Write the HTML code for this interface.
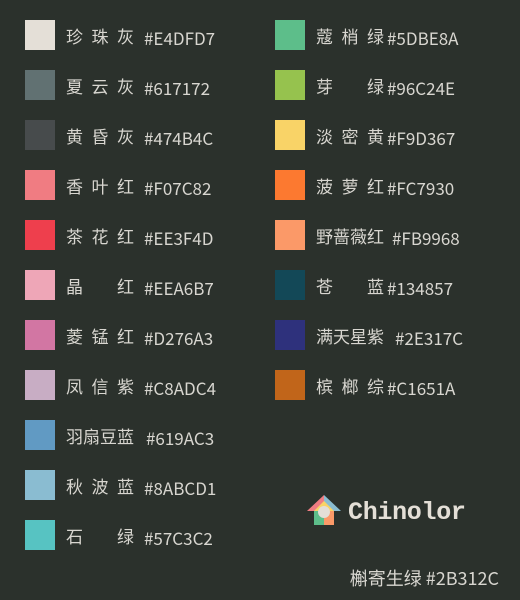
<!DOCTYPE html>
<html><head><meta charset="utf-8"><style>
html,body{margin:0;padding:0}
body{width:520px;height:600px;background:#2B312C;position:relative;overflow:hidden;font-family:"Liberation Sans","Noto Sans CJK SC",sans-serif;color:#d8d6d0}
.r{position:absolute;height:30px}
.s{position:absolute;left:0;top:0;width:30px;height:30px}
.t{position:absolute;left:41px;top:3px;font-size:17px;line-height:30px;white-space:nowrap;display:flex}
.n{display:flex;justify-content:space-between;width:68px;margin-right:10px}
.h{font-family:"Noto Sans CJK SC",sans-serif}
.R .n{margin-right:3px}
.R .n4{margin-right:8px}
.L .n4{margin-right:12px}
</style></head><body>
<div class="r L" style="left:25px;top:20px"><div class="s" style="background:#E4DFD7"></div><div class="t"><span class="n"><span>珍</span><span>珠</span><span>灰</span></span><span class="h">#E4DFD7</span></div></div>
<div class="r L" style="left:25px;top:70px"><div class="s" style="background:#617172"></div><div class="t"><span class="n"><span>夏</span><span>云</span><span>灰</span></span><span class="h">#617172</span></div></div>
<div class="r L" style="left:25px;top:120px"><div class="s" style="background:#474B4C"></div><div class="t"><span class="n"><span>黄</span><span>昏</span><span>灰</span></span><span class="h">#474B4C</span></div></div>
<div class="r L" style="left:25px;top:170px"><div class="s" style="background:#F07C82"></div><div class="t"><span class="n"><span>香</span><span>叶</span><span>红</span></span><span class="h">#F07C82</span></div></div>
<div class="r L" style="left:25px;top:220px"><div class="s" style="background:#EE3F4D"></div><div class="t"><span class="n"><span>茶</span><span>花</span><span>红</span></span><span class="h">#EE3F4D</span></div></div>
<div class="r L" style="left:25px;top:270px"><div class="s" style="background:#EEA6B7"></div><div class="t"><span class="n"><span>晶</span><span></span><span>红</span></span><span class="h">#EEA6B7</span></div></div>
<div class="r L" style="left:25px;top:320px"><div class="s" style="background:#D276A3"></div><div class="t"><span class="n"><span>菱</span><span>锰</span><span>红</span></span><span class="h">#D276A3</span></div></div>
<div class="r L" style="left:25px;top:370px"><div class="s" style="background:#C8ADC4"></div><div class="t"><span class="n"><span>凤</span><span>信</span><span>紫</span></span><span class="h">#C8ADC4</span></div></div>
<div class="r L" style="left:25px;top:420px"><div class="s" style="background:#619AC3"></div><div class="t"><span class="n n4"><span>羽扇豆蓝</span></span><span class="h">#619AC3</span></div></div>
<div class="r L" style="left:25px;top:470px"><div class="s" style="background:#8ABCD1"></div><div class="t"><span class="n"><span>秋</span><span>波</span><span>蓝</span></span><span class="h">#8ABCD1</span></div></div>
<div class="r L" style="left:25px;top:520px"><div class="s" style="background:#57C3C2"></div><div class="t"><span class="n"><span>石</span><span></span><span>绿</span></span><span class="h">#57C3C2</span></div></div>

<div class="r R" style="left:275px;top:20px"><div class="s" style="background:#5DBE8A"></div><div class="t"><span class="n"><span>蔻</span><span>梢</span><span>绿</span></span><span class="h">#5DBE8A</span></div></div>
<div class="r R" style="left:275px;top:70px"><div class="s" style="background:#96C24E"></div><div class="t"><span class="n"><span>芽</span><span></span><span>绿</span></span><span class="h">#96C24E</span></div></div>
<div class="r R" style="left:275px;top:120px"><div class="s" style="background:#F9D367"></div><div class="t"><span class="n"><span>淡</span><span>密</span><span>黄</span></span><span class="h">#F9D367</span></div></div>
<div class="r R" style="left:275px;top:170px"><div class="s" style="background:#FC7930"></div><div class="t"><span class="n"><span>菠</span><span>萝</span><span>红</span></span><span class="h">#FC7930</span></div></div>
<div class="r R" style="left:275px;top:220px"><div class="s" style="background:#FB9968"></div><div class="t"><span class="n n4"><span>野蔷薇红</span></span><span class="h">#FB9968</span></div></div>
<div class="r R" style="left:275px;top:270px"><div class="s" style="background:#134857"></div><div class="t"><span class="n"><span>苍</span><span></span><span>蓝</span></span><span class="h">#134857</span></div></div>
<div class="r R" style="left:275px;top:320px"><div class="s" style="background:#2E317C"></div><div class="t"><span class="n n4" style="margin-right:11px"><span>满天星紫</span></span><span class="h">#2E317C</span></div></div>
<div class="r R" style="left:275px;top:370px"><div class="s" style="background:#C1651A"></div><div class="t"><span class="n"><span>槟</span><span>榔</span><span>综</span></span><span class="h">#C1651A</span></div></div>

<svg style="position:absolute;left:300px;top:490px" width="50" height="40" viewBox="300 490 50 40">
<polygon points="324,495 307,511 324,511" fill="#F07C82"/>
<polygon points="324,495 341,511 324,511" fill="#8ABCD1"/>
<polygon points="324,501 314,511 334,511" fill="#F9D367"/>
<rect x="314" y="511" width="10" height="14" fill="#5DBE8A"/>
<rect x="324" y="511" width="10" height="14" fill="#FB9968"/>
<circle cx="324" cy="512" r="6" fill="#E4DFD7"/>
</svg>
<div style="position:absolute;left:348px;top:497px;font-family:'Liberation Mono','DejaVu Sans Mono',monospace;font-weight:bold;font-size:25px;line-height:32px;color:#E4DFD7;letter-spacing:-0.3px">Chinolor</div>
<div style="position:absolute;right:21px;top:564px;font-size:18px;line-height:28px;font-family:'Noto Sans CJK SC',sans-serif">槲寄生绿 #2B312C</div>
</body></html>
